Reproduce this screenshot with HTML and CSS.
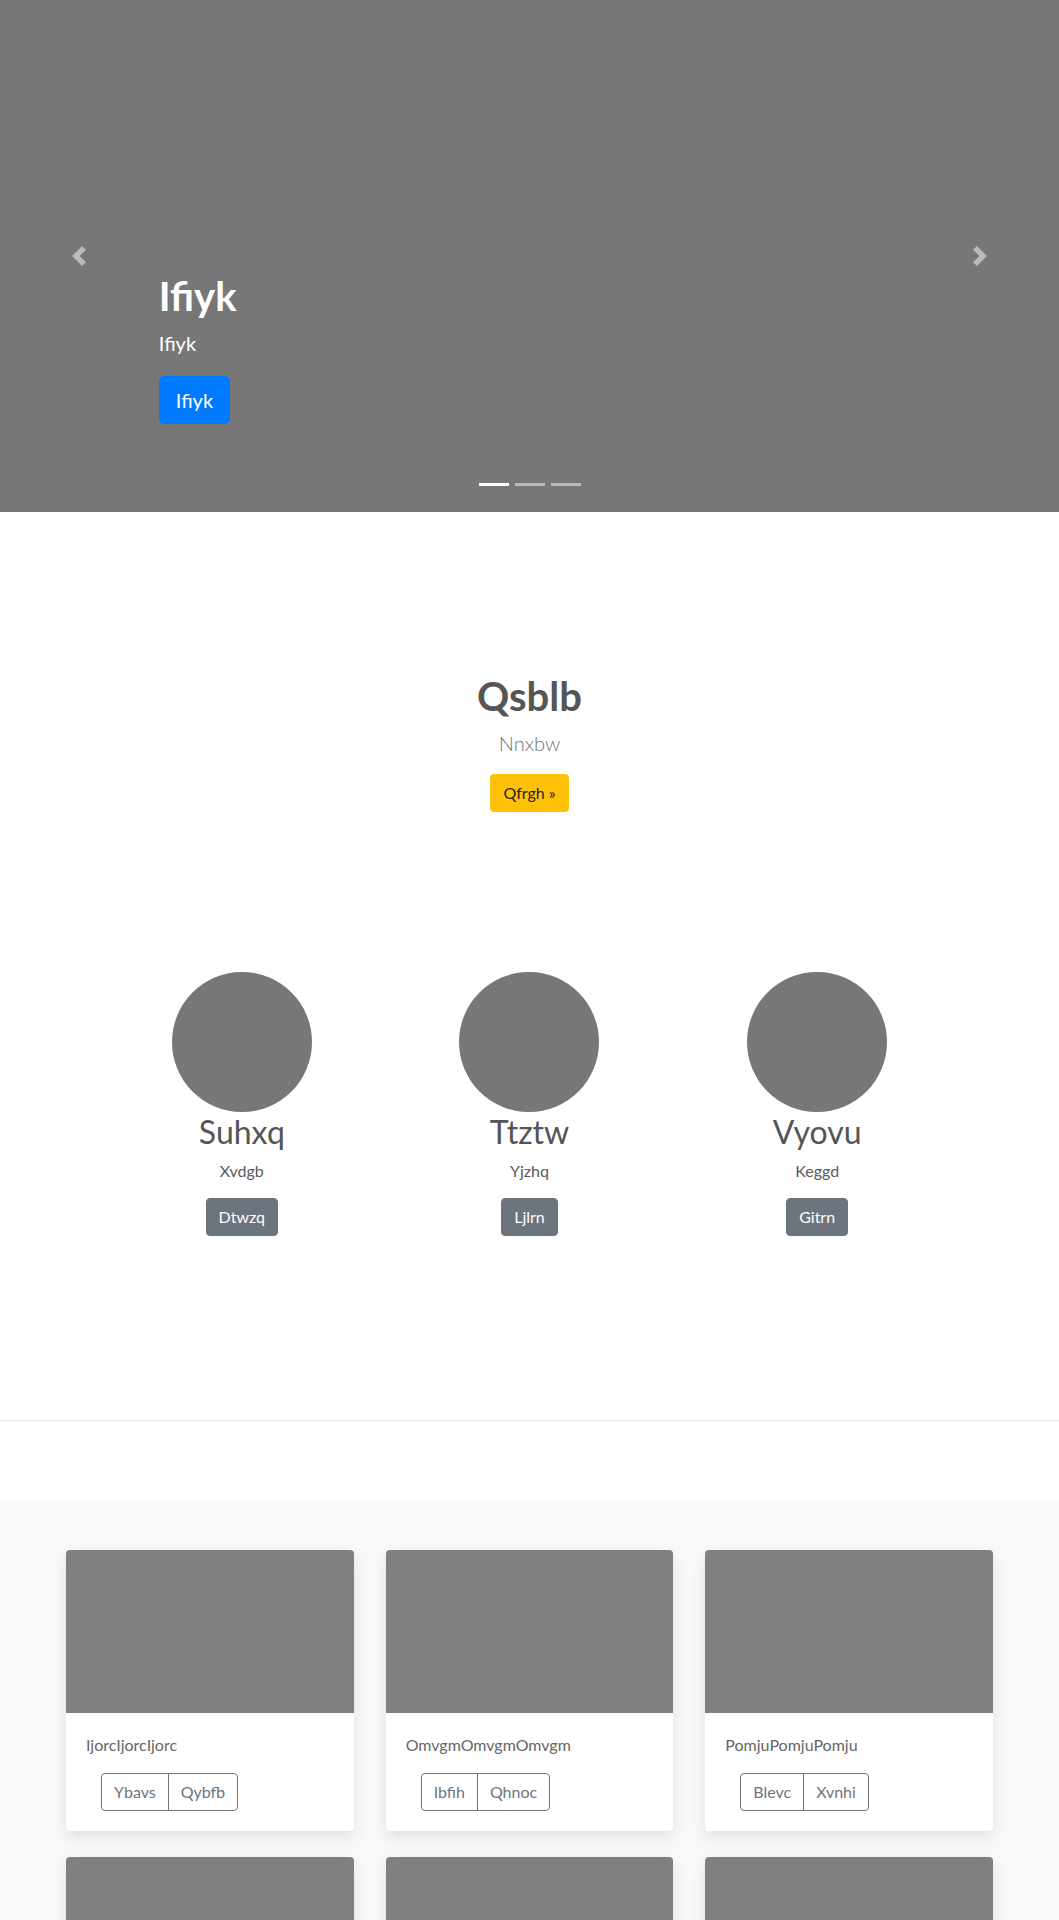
FILE: index.html
```html
<!DOCTYPE html>
<html lang="en">
<head>
<meta charset="utf-8">
<title>Carousel</title>
<link rel="stylesheet" href="styles.css">
</head>
<body>
<div class="carousel">
  <div class="carousel-caption">
    <h1 class="caption-title">Ifiyk</h1>
    <p class="caption-text">Ifiyk</p>
    <a class="btn btn-lg btn-primary" href="#">Ifiyk</a>
  </div>
  <a class="carousel-control prev" href="#" aria-label="Previous">
    <svg class="control-icon" viewBox="0 0 8 8" width="20" height="20"><path d="M5.25 0l-4 4 4 4 1.5-1.5L4.25 4l2.5-2.5L5.25 0z" fill="#fff"/></svg>
  </a>
  <a class="carousel-control next" href="#" aria-label="Next">
    <svg class="control-icon" viewBox="0 0 8 8" width="20" height="20"><path d="M2.75 0l-1.5 1.5L3.75 4l-2.5 2.5L2.75 8l4-4-4-4z" fill="#fff"/></svg>
  </a>
  <ol class="indicators">
    <li class="indicator active"></li>
    <li class="indicator"></li>
    <li class="indicator"></li>
  </ol>
</div>

<section class="jumbo">
  <h1 class="jumbo-title">Qsblb</h1>
  <p class="lead">Nnxbw</p>
  <a class="btn btn-warning" href="#">Qfrgh &raquo;</a>
</section>

<section class="marketing">
  <div class="feature">
    <div class="circle"></div>
    <h2 class="feature-title">Suhxq</h2>
    <p class="feature-text">Xvdgb</p>
    <a class="btn btn-secondary" href="#">Dtwzq</a>
  </div>
  <div class="feature">
    <div class="circle"></div>
    <h2 class="feature-title">Ttztw</h2>
    <p class="feature-text">Yjzhq</p>
    <a class="btn btn-secondary" href="#">Ljlrn</a>
  </div>
  <div class="feature">
    <div class="circle"></div>
    <h2 class="feature-title">Vyovu</h2>
    <p class="feature-text">Keggd</p>
    <a class="btn btn-secondary" href="#">Gitrn</a>
  </div>
</section>

<hr class="divider">

<section class="album">
  <div class="card-grid">
    <div class="card">
      <div class="thumb"></div>
      <div class="card-body">
        <p class="card-text">IjorcIjorcIjorc</p>
        <div class="btn-group"><a class="btn btn-outline" href="#">Ybavs</a><a class="btn btn-outline" href="#">Qybfb</a></div>
      </div>
    </div>
    <div class="card">
      <div class="thumb"></div>
      <div class="card-body">
        <p class="card-text">OmvgmOmvgmOmvgm</p>
        <div class="btn-group"><a class="btn btn-outline" href="#">Ibfih</a><a class="btn btn-outline" href="#">Qhnoc</a></div>
      </div>
    </div>
    <div class="card">
      <div class="thumb"></div>
      <div class="card-body">
        <p class="card-text">PomjuPomjuPomju</p>
        <div class="btn-group"><a class="btn btn-outline" href="#">Blevc</a><a class="btn btn-outline" href="#">Xvnhi</a></div>
      </div>
    </div>
    <div class="card">
      <div class="thumb"></div>
    </div>
    <div class="card">
      <div class="thumb"></div>
    </div>
    <div class="card">
      <div class="thumb"></div>
    </div>
  </div>
</section>
</body>
</html>
```
FILE: styles.css
```css
* { box-sizing: border-box; }
body {
  margin: 0;
  font-family: Lato, "Open Sans", sans-serif;
  font-size: 16px;
  line-height: 1.5;
  color: #5a5a5a;
  background: #fff;
}
a { text-decoration: none; }

/* carousel */
.carousel {
  position: relative;
  height: 512px;
  background: #777;
  overflow: hidden;
}
.carousel-caption {
  padding: 272px 15% 0 15%;
  color: #fff;
}
.caption-title {
  margin: 0 0 8px;
  font-size: 40px;
  line-height: 48px;
  font-weight: 700;
}
.caption-text {
  margin: 0 0 18px;
  font-size: 20px;
  line-height: 30px;
}
.carousel-control {
  position: absolute;
  top: 0;
  bottom: 0;
  width: 15%;
  display: flex;
  align-items: center;
  justify-content: center;
  opacity: .5;
}
.carousel-control.prev { left: 0; }
.carousel-control.next { right: 0; }
.control-icon { display: block; width: 20px; height: 20px; }
.indicators {
  position: absolute;
  bottom: 26px;
  left: 0;
  right: 0;
  margin: 0;
  padding: 0;
  list-style: none;
  display: flex;
  justify-content: center;
  gap: 6px;
}
.indicator {
  width: 30px;
  height: 3px;
  background: #fff;
  opacity: .5;
}
.indicator.active { opacity: 1; }

/* buttons */
.btn {
  display: inline-block;
  font-size: 16px;
  line-height: 24px;
  padding: 6px 12px;
  border: 1px solid transparent;
  border-radius: 4px;
  text-align: center;
  vertical-align: middle;
}
.btn-lg {
  font-size: 20px;
  line-height: 30px;
  padding: 8px 16px;
  border-radius: 4.8px;
}
.btn-primary { background: #007bff; border-color: #007bff; color: #fff; }
.btn-warning { background: #ffc107; border-color: #ffc107; color: #212529; }
.btn-secondary { background: #6c757d; border-color: #6c757d; color: #fff; }
.btn-outline { background: transparent; border-color: #6c757d; color: #6c757d; }

/* jumbotron */
.jumbo {
  padding-top: 160px;
  text-align: center;
}
.jumbo-title {
  margin: 0 0 8px;
  font-size: 40px;
  line-height: 48px;
  font-weight: 700;
  color: #555;
}
.lead {
  margin: 0 0 16px;
  font-size: 20px;
  line-height: 30px;
  font-weight: 300;
  color: #6c757d;
}

/* marketing */
.marketing {
  max-width: 863px;
  margin: 160px auto 0;
  display: grid;
  grid-template-columns: repeat(3, 1fr);
  text-align: center;
}
.feature { display: flex; flex-direction: column; align-items: center; }
.circle {
  width: 140px;
  height: 140px;
  border-radius: 50%;
  background: #777;
}
.feature-title {
  margin: 1px 0 8px;
  font-size: 32px;
  line-height: 38.4px;
  font-weight: 400;
  color: #555;
}
.feature-text {
  margin: 0 0 15px;
}

/* divider */
.divider {
  margin: 184px 0 80px;
  border: 0;
  border-top: 1px solid rgba(0,0,0,.1);
}

/* album */
.album {
  background: #f8f9fa;
  padding: 49px 0 48px;
}
.card-grid {
  max-width: 927px;
  margin: 0 auto;
  display: grid;
  grid-template-columns: repeat(3, 1fr);
  column-gap: 32px;
  row-gap: 26px;
}
.card {
  background: #fff;
  border-radius: 4px;
  overflow: hidden;
  box-shadow: 0 6px 16px rgba(0,0,0,.1);
}
.thumb {
  height: 163px;
  background: #808080;
}
.card-body { padding: 20px; }
.card-text {
  margin: 0 0 16px;
  color: #666;
}
.btn-group {
  display: inline-flex;
  margin-left: 15px;
}
.btn-group .btn:first-child { border-top-right-radius: 0; border-bottom-right-radius: 0; }
.btn-group .btn + .btn { margin-left: -1px; border-top-left-radius: 0; border-bottom-left-radius: 0; }
```
